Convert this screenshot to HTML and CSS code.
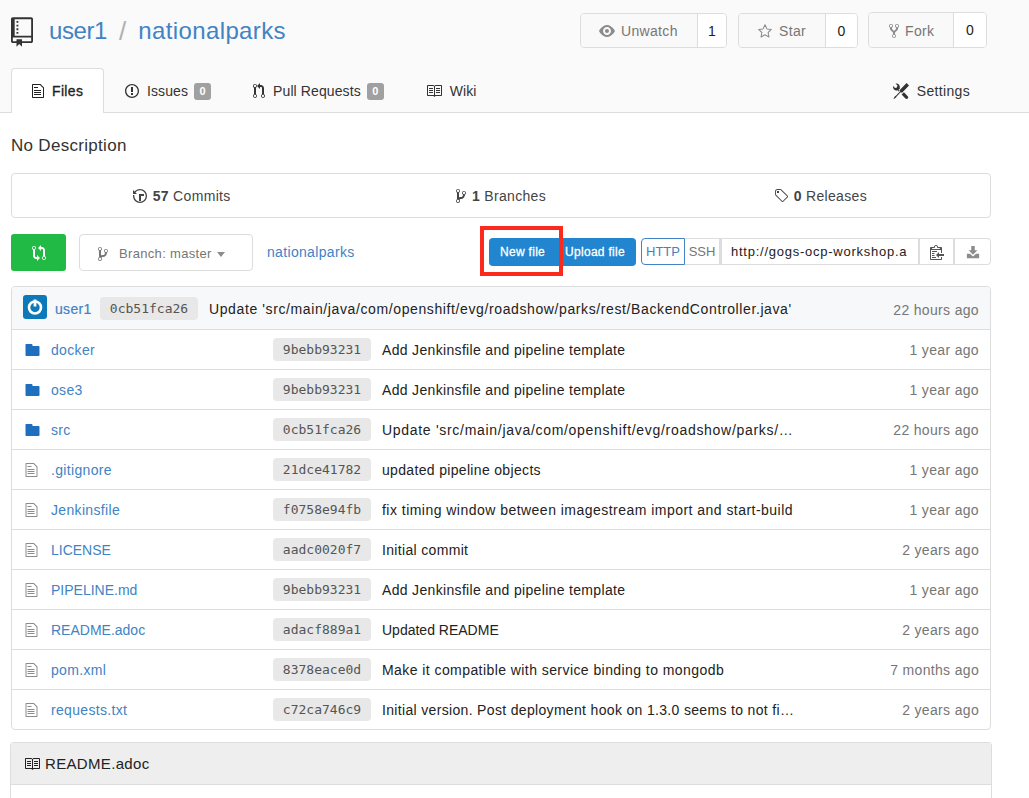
FILE: index.html
```html
<!DOCTYPE html>
<html lang="en">
<head>
<meta charset="utf-8">
<title>user1/nationalparks</title>
<link rel="stylesheet" href="styles.css">
</head>
<body>
<svg class="sprite" aria-hidden="true">
  <defs>
    <symbol id="i-repo" viewBox="0 0 12 16"><path d="M4 9H3V8h1v1zm0-3H3v1h1V6zm0-2H3v1h1V4zm0-2H3v1h1V2zm8-1v12c0 .55-.45 1-1 1H6v2l-1.5-1.5L3 16v-2H1c-.55 0-1-.45-1-1V1c0-.55.45-1 1-1h10c.55 0 1 .45 1 1zm-1 10H1v2h2v-1h3v1h5v-2zm0-10H2v9h9V1z"/></symbol>
    <symbol id="i-file" viewBox="0 0 12 16"><path d="M6 5H2V4h4v1zM2 8h7V7H2v1zm0 2h7V9H2v1zm0 2h7v-1H2v1zm10-7.500V14c0 .55-.45 1-1 1H1c-.55 0-1-.45-1-1V2c0-.55.45-1 1-1h7.500L12 4.500zM11 5L8 2H1v12h10V5z"/></symbol>
    <symbol id="i-issue" viewBox="0 0 14 16"><path d="M7 2.300c3.140 0 5.700 2.560 5.700 5.700s-2.560 5.700-5.700 5.700A5.710 5.710 0 0 1 1.300 8c0-3.140 2.560-5.700 5.700-5.700zM7 1C3.140 1 0 4.140 0 8s3.140 7 7 7 7-3.140 7-7-3.140-7-7-7zm1 3H6v5h2V4zm0 6H6v2h2v-2z"/></symbol>
    <symbol id="i-pr" viewBox="0 0 12 16"><path d="M11 11.280V5c-.03-.78-.34-1.470-.94-2.060C9.460 2.350 8.780 2.030 8 2H7V0L4 3l3 3V4h1c.27.02.48.11.69.31.21.2.3.42.31.69v6.280A1.993 1.993 0 0 0 10 15a1.993 1.993 0 0 0 1-3.720zm-1 2.920c-.66 0-1.200-.55-1.200-1.200 0-.65.55-1.200 1.200-1.200.65 0 1.200.55 1.200 1.200 0 .65-.55 1.200-1.200 1.200zM4 3c0-1.110-.89-2-2-2a1.993 1.993 0 0 0-1 3.720v6.560A1.993 1.993 0 0 0 2 15a1.993 1.993 0 0 0 1-3.720V4.720c.59-.34 1-.98 1-1.720zm-.8 10c0 .66-.55 1.200-1.200 1.200-.65 0-1.200-.55-1.200-1.200 0-.65.55-1.200 1.200-1.200.65 0 1.200.55 1.200 1.200zM2 4.200C1.340 4.200.8 3.650.8 3c0-.65.55-1.200 1.200-1.200.65 0 1.200.55 1.200 1.200 0 .65-.55 1.200-1.200 1.200z"/></symbol>
    <symbol id="i-book" viewBox="0 0 16 16"><path d="M3 5h4v1H3V5zm0 3h4V7H3v1zm0 2h4V9H3v1zm11-5h-4v1h4V5zm0 2h-4v1h4V7zm0 2h-4v1h4V9zm2-6v9c0 .55-.45 1-1 1H9.500l-1 1-1-1H2c-.55 0-1-.45-1-1V3c0-.55.45-1 1-1h5.500l1 1 1-1H15c.55 0 1 .45 1 1zm-8 .5L7.500 3H2v9h6V3.500zm7-.5H9.500l-.5.5V12h6V3z"/></symbol>
    <symbol id="i-tools" viewBox="0 0 16 16"><path d="M4.480 7.270c.26.26 1.280 1.330 1.280 1.330l.56-.58-.88-.91 1.690-1.800s-.76-.74-.43-.45c.32-1.190.03-2.510-.87-3.440C4.930.5 3.660.2 2.520.51l1.930 2-.51 1.960-1.890.52-1.930-2C-.19 4.170.1 5.480 1 6.400c.94.98 2.290 1.260 3.480.87zm6.440 1.940l-2.330 2.300 3.840 3.980c.31.33.73.49 1.140.49.41 0 .82-.16 1.140-.49.63-.65.63-1.700 0-2.350l-3.790-3.930zM16 2.530L13.550 0 6.330 7.460l.88.91-4.310 4.460-.99.53-1.390 2.270.35.37 2.200-1.440.51-1.020L7.900 9.080l.88.91L16 2.530z"/></symbol>
    <symbol id="i-eye" viewBox="0 0 16 16"><path d="M8.060 2C3 2 0 8 0 8s3 6 8.060 6C13 14 16 8 16 8s-3-6-7.940-6zM8 12c-2.200 0-4-1.780-4-4 0-2.200 1.800-4 4-4 2.220 0 4 1.800 4 4 0 2.220-1.780 4-4 4zm2-4c0 1.110-.89 2-2 2-1.110 0-2-.89-2-2 0-1.110.89-2 2-2 1.110 0 2 .89 2 2z"/></symbol>
    <symbol id="i-star" viewBox="0 0 16 16"><path d="M8 1.800l1.900 4.100 4.500.55-3.300 3.050.87 4.450L8 11.750 4.030 13.950l.87-4.450L1.600 6.450l4.500-.55z" fill="none" stroke="currentColor" stroke-width="1.050" stroke-linejoin="round"/></symbol>
    <symbol id="i-fork" viewBox="0 0 10 16"><path d="M8 1a1.993 1.993 0 0 0-1 3.720V6L5 8 3 6V4.720A1.993 1.993 0 0 0 2 1a1.993 1.993 0 0 0-1 3.720V6.500l3 3v1.780A1.993 1.993 0 0 0 5 15a1.993 1.993 0 0 0 1-3.720V9.500l3-3V4.720A1.993 1.993 0 0 0 8 1zM2 4.200C1.340 4.200.8 3.650.8 3c0-.65.55-1.200 1.200-1.200.65 0 1.200.55 1.200 1.200 0 .65-.55 1.200-1.200 1.200zm3 10c-.66 0-1.200-.55-1.200-1.200 0-.65.55-1.200 1.200-1.200.65 0 1.200.55 1.200 1.200 0 .65-.55 1.200-1.200 1.200zm3-10c-.66 0-1.200-.55-1.200-1.200 0-.65.55-1.200 1.200-1.200.65 0 1.200.55 1.200 1.200 0 .65-.55 1.200-1.200 1.200z"/></symbol>
    <symbol id="i-history" viewBox="0 0 14 16"><path d="M8 13H6V6h5v2H8v5zM7 1C4.810 1 2.870 2.020 1.590 3.590L0 2v4h4L2.500 4.500C3.550 3.170 5.170 2.300 7 2.300c3.140 0 5.700 2.560 5.700 5.700s-2.560 5.700-5.700 5.700A5.710 5.710 0 0 1 1.300 8c0-.34.03-.67.09-1H.08C.03 7.330 0 7.660 0 8c0 3.860 3.140 7 7 7s7-3.140 7-7-3.140-7-7-7z"/></symbol>
    <symbol id="i-branch" viewBox="0 0 10 16"><path d="M10 5c0-1.110-.89-2-2-2a1.993 1.993 0 0 0-1 3.720v.3c-.02.52-.23.98-.63 1.380-.4.4-.86.61-1.380.63-.83.02-1.480.16-2 .45V4.720a1.993 1.993 0 0 0-1-3.720C.88 1 0 1.890 0 3a2 2 0 0 0 1 1.720v6.560c-.59.35-1 .99-1 1.720 0 1.110.89 2 2 2 1.110 0 2-.89 2-2 0-.53-.2-1-.53-1.360.09-.06.48-.41.59-.47.25-.11.56-.17.94-.17 1.050-.05 1.950-.45 2.750-1.250S8.950 7.770 9 6.730h-.02C9.590 6.370 10 5.730 10 5zM2 1.800c.66 0 1.200.55 1.200 1.200 0 .65-.55 1.200-1.200 1.200C1.350 4.200.8 3.650.8 3c0-.65.55-1.200 1.200-1.200zm0 12.410c-.66 0-1.200-.55-1.200-1.200 0-.65.55-1.200 1.200-1.200.65 0 1.200.55 1.200 1.200 0 .65-.55 1.200-1.200 1.200zm6-8c-.66 0-1.200-.55-1.200-1.200 0-.65.55-1.200 1.200-1.200.65 0 1.200.55 1.200 1.200 0 .65-.55 1.200-1.200 1.200z"/></symbol>
    <symbol id="i-tag" viewBox="0 0 14 16"><path d="M7.730 1.730C7.260 1.260 6.620 1 5.960 1H3.500C2.130 1 1 2.130 1 3.500v2.470c0 .66.27 1.300.73 1.770l6.060 6.060c.39.39 1.020.39 1.410 0l4.590-4.590a.996.996 0 0 0 0-1.410L7.730 1.730zM2.380 7.090c-.31-.3-.47-.7-.47-1.130V3.500c0-.88.72-1.590 1.590-1.590h2.470c.42 0 .83.16 1.130.47l6.140 6.130-4.730 4.730-6.130-6.150zM3.010 3h2v2H3V3h.01z"/></symbol>
    <symbol id="i-compare" viewBox="0 0 14 16"><path d="M5 12H4c-.27-.02-.48-.11-.69-.31-.21-.2-.3-.42-.31-.69V4.720A1.993 1.993 0 0 0 2 1a1.993 1.993 0 0 0-1 3.720V11c.03.78.34 1.470.94 2.060.6.59 1.280.91 2.060.94h1v2l3-3-3-3v2zM2 1.800c.66 0 1.200.55 1.200 1.200 0 .65-.55 1.200-1.200 1.200C1.350 4.200.8 3.650.8 3c0-.65.55-1.200 1.200-1.200zm11 9.480V5c-.03-.78-.34-1.470-.94-2.060-.6-.59-1.280-.91-2.060-.94H9V0L6 3l3 3V4h1c.27.02.48.11.69.31.21.2.3.42.31.69v6.280A1.993 1.993 0 0 0 12 15a1.993 1.993 0 0 0 1-3.720zm-1 2.920c-.66 0-1.200-.55-1.200-1.200 0-.65.55-1.200 1.200-1.200.65 0 1.200.55 1.200 1.200 0 .65-.55 1.200-1.200 1.200z"/></symbol>
    <symbol id="i-clippy" viewBox="0 0 14 16"><path d="M2 13h4v1H2v-1zm5-6H2v1h5V7zm2 3V8l-3 3 3 3v-2h5v-2H9zM4.500 9H2v1h2.500V9zM2 12h2.500v-1H2v1zm9 1h1v2c-.02.28-.11.52-.3.7-.19.18-.42.28-.7.3H1c-.55 0-1-.45-1-1V4c0-.55.45-1 1-1h3c0-1.110.89-2 2-2 1.110 0 2 .89 2 2h3c.55 0 1 .45 1 1v5h-1V6H1v9h10v-2zM2 5h8c0-.55-.45-1-1-1H8c-.55 0-1-.45-1-1s-.45-1-1-1-1 .45-1 1-.45 1-1 1H3c-.55 0-1 .45-1 1z"/></symbol>
    <symbol id="i-download" viewBox="0 0 16 16"><path d="M6 1h4v5h3L8 11 3 6h3zM1 10h3.500L8 13l3.500-3H15v5H1z"/></symbol>
    <symbol id="i-dir" viewBox="0 0 14 16"><path d="M13 4H7V3c0-.66-.31-1-1-1H1c-.55 0-1 .45-1 1v10c0 .55.45 1 1 1h12c.55 0 1-.45 1-1V5c0-.55-.45-1-1-1z"/></symbol>
  </defs>
</svg>

<header class="repo-head">
  <div class="head-top">
    <h1 class="repo-title">
      <svg class="ic-repo"><use href="#i-repo"/></svg>
      <a class="title-user" href="#">user1</a><span class="slash">/</span><a class="title-repo" href="#">nationalparks</a>
    </h1>
    <div class="head-actions">
      <div class="counter">
        <a class="counter-btn btn-watch" href="#"><svg class="ic ic-16 muted"><use href="#i-eye"/></svg>Unwatch</a><span class="counter-num num-watch">1</span>
      </div>
      <div class="counter">
        <a class="counter-btn btn-star" href="#"><svg class="ic ic-16 muted"><use href="#i-star"/></svg>Star</a><span class="counter-num num-star">0</span>
      </div>
      <div class="counter counter-fork">
        <a class="counter-btn btn-fork" href="#"><svg class="ic ic-10 muted"><use href="#i-fork"/></svg>Fork</a><span class="counter-num num-fork">0</span>
      </div>
    </div>
  </div>
  <nav class="tabs">
    <a class="tab active" href="#"><svg class="ic ic-12"><use href="#i-file"/></svg>Files</a>
    <a class="tab" href="#"><svg class="ic ic-14"><use href="#i-issue"/></svg>Issues<span class="badge">0</span></a>
    <a class="tab" href="#"><svg class="ic ic-12"><use href="#i-pr"/></svg>Pull Requests<span class="badge">0</span></a>
    <a class="tab" href="#"><svg class="ic ic-16"><use href="#i-book"/></svg>Wiki</a>
    <a class="tab tab-right" href="#"><svg class="ic ic-16"><use href="#i-tools"/></svg>Settings</a>
  </nav>
</header>

<main class="page">
  <p class="description">No Description</p>

  <div class="stats">
    <a class="stat" href="#"><svg class="ic ic-14"><use href="#i-history"/></svg><b>57</b> Commits</a>
    <a class="stat" href="#"><svg class="ic ic-10"><use href="#i-branch"/></svg><b>1</b> Branches</a>
    <a class="stat" href="#"><svg class="ic ic-14"><use href="#i-tag"/></svg><b>0</b> Releases</a>
  </div>

  <div class="toolbar">
    <a class="btn-compare" href="#"><svg class="ic-compare"><use href="#i-compare"/></svg></a>
    <a class="btn-branch" href="#"><svg class="ic ic-10"><use href="#i-branch"/></svg>Branch: master<span class="caret"></span></a>
    <a class="crumb" href="#">nationalparks</a>
    <div class="file-actions">
      <a class="btn-blue first" href="#">New file</a><a class="btn-blue last" href="#">Upload file</a>
    </div>
    <div class="clone">
      <span class="clone-http">HTTP</span><span class="clone-ssh">SSH</span><span class="clone-url">http://gogs-ocp-workshop.a</span><span class="clone-icon"><svg class="ic-clip"><use href="#i-clippy"/></svg></span><span class="clone-icon last"><svg class="ic-dl"><use href="#i-download"/></svg></span>
    </div>
    <div class="highlight"></div>
  </div>

  <section class="files">
    <div class="commit-row">
      <span class="avatar">
        <svg viewBox="0 0 24 24" width="24" height="24"><circle cx="12" cy="12.500" r="6" fill="none" stroke="#fff" stroke-width="2.600"/><rect x="10.600" y="4.500" width="2.800" height="7" fill="#fff"/></svg>
      </span>
      <a class="commit-user" href="#">user1</a>
      <a class="sha" href="#">0cb51fca26</a>
      <span class="commit-msg">Update 'src/main/java/com/openshift/evg/roadshow/parks/rest/BackendController.java'</span>
      <span class="age age-head">22 hours ago</span>
    </div>
    <div class="row"><span class="name"><svg class="ic-dir"><use href="#i-dir"/></svg><a href="#">docker</a></span><a class="sha" href="#">9bebb93231</a><span class="msg">Add Jenkinsfile and pipeline template</span><span class="age">1 year ago</span></div>
    <div class="row"><span class="name"><svg class="ic-dir"><use href="#i-dir"/></svg><a href="#">ose3</a></span><a class="sha" href="#">9bebb93231</a><span class="msg">Add Jenkinsfile and pipeline template</span><span class="age">1 year ago</span></div>
    <div class="row"><span class="name"><svg class="ic-dir"><use href="#i-dir"/></svg><a href="#">src</a></span><a class="sha" href="#">0cb51fca26</a><span class="msg msg-path">Update 'src/main/java/com/openshift/evg/roadshow/parks/…</span><span class="age">22 hours ago</span></div>
    <div class="row"><span class="name"><svg class="ic-doc"><use href="#i-file"/></svg><a href="#">.gitignore</a></span><a class="sha" href="#">21dce41782</a><span class="msg">updated pipeline objects</span><span class="age">1 year ago</span></div>
    <div class="row"><span class="name"><svg class="ic-doc"><use href="#i-file"/></svg><a href="#">Jenkinsfile</a></span><a class="sha" href="#">f0758e94fb</a><span class="msg msg-dash">fix timing window between imagestream import and start-build</span><span class="age">1 year ago</span></div>
    <div class="row"><span class="name"><svg class="ic-doc"><use href="#i-file"/></svg><a class="caps" href="#">LICENSE</a></span><a class="sha" href="#">aadc0020f7</a><span class="msg">Initial commit</span><span class="age">2 years ago</span></div>
    <div class="row"><span class="name"><svg class="ic-doc"><use href="#i-file"/></svg><a class="caps" href="#">PIPELINE.md</a></span><a class="sha" href="#">9bebb93231</a><span class="msg">Add Jenkinsfile and pipeline template</span><span class="age">1 year ago</span></div>
    <div class="row"><span class="name"><svg class="ic-doc"><use href="#i-file"/></svg><a class="caps" href="#">README.adoc</a></span><a class="sha" href="#">adacf889a1</a><span class="msg caps">Updated README</span><span class="age">2 years ago</span></div>
    <div class="row"><span class="name"><svg class="ic-doc"><use href="#i-file"/></svg><a href="#">pom.xml</a></span><a class="sha" href="#">8378eace0d</a><span class="msg msg-wide">Make it compatible with service binding to mongodb</span><span class="age">7 months ago</span></div>
    <div class="row"><span class="name"><svg class="ic-doc"><use href="#i-file"/></svg><a href="#">requests.txt</a></span><a class="sha" href="#">c72ca746c9</a><span class="msg">Initial version. Post deployment hook on 1.3.0 seems to not fi…</span><span class="age">2 years ago</span></div>
  </section>

  <section class="readme">
    <div class="readme-head"><svg class="ic ic-16"><use href="#i-book"/></svg>README.adoc</div>
    <div class="readme-body"></div>
  </section>
</main>
</body>
</html>
```

FILE: styles.css
```css
* { box-sizing: border-box; }
html, body { margin: 0; padding: 0; }
body {
  font-family: "Liberation Sans", Arial, sans-serif;
  font-size: 14px;
  line-height: 20px;
  letter-spacing: 0.33px;
  color: #333;
  background: #fff;
}
a { color: inherit; text-decoration: none; }
.sprite { display: none; }
.ic { fill: currentColor; height: 16px; flex: none; margin-right: 8px; }
.ic-16 { width: 16px; }
.ic-14 { width: 14px; }
.ic-12 { width: 12px; }
.ic-10 { width: 10px; }
.muted { color: #8c8c8c; }

/* Header */
.repo-head {
  height: 113px;
  background: #fafafa;
  border-bottom: 1px solid #ddd;
  padding: 12px 38px 0 11px;
}
.head-top { display: flex; justify-content: space-between; height: 36px; }
.repo-title {
  margin: 1px 0 0;
  display: flex;
  align-items: center;
  font-size: 24px;
  font-weight: 400;
  line-height: 36px;
  color: #4183c4;
  height: 36px;
}
.title-user { letter-spacing: -0.4px; }
.title-repo { letter-spacing: 0.38px; }
.ic-repo { width: 22px; height: 30px; fill: #333; margin: 0 16px -1px 0; flex: none; }
.slash { color: #b0b0b0; margin: 0 12px; font-size: 26px; letter-spacing: 0; }

.head-actions { display: flex; gap: 11px; margin-right: 4px; margin-top: 1px; }
.counter {
  display: flex;
  height: 35px;
  border: 1px solid #ddd;
  border-radius: 4px;
  overflow: hidden;
}
.counter-fork { height: 36px; margin-top: -1px; margin-left: -1px; }
.counter-btn {
  display: flex;
  align-items: center;
  background: #f9f9f9;
  color: #767676;
  font-size: 14px;
  border-right: 1px solid #ddd;
}
.btn-watch { width: 117px; padding-left: 18px; }
.btn-star { width: 87px; padding-left: 18px; }
.btn-fork { width: 85px; padding: 2px 0 0 20px; }
.counter-btn .ic-16 { margin-right: 6px; }
.counter-btn .ic-10 { margin-right: 6px; }
.counter-num {
  display: flex;
  align-items: center;
  justify-content: center;
  background: #fff;
  color: #222;
  font-size: 14px;
}
.num-watch { width: 28px; }
.num-star { width: 31px; }
.num-fork { width: 32px; }

.tabs { display: flex; margin-top: 20px; height: 45px; }
.tab {
  display: flex;
  align-items: center;
  padding: 0 20px;
  border: 1px solid transparent;
  border-bottom: 0;
  color: #333;
  font-size: 14px;
  letter-spacing: 0.1px;
}
.tab.active {
  width: 93px;
  background: #fff;
  border-color: #ddd;
  border-radius: 4px 4px 0 0;
  color: #222;
  letter-spacing: 0.33px;
  -webkit-text-stroke: 0.3px #222;
}
.tab-right { margin-left: auto; letter-spacing: 0.33px; }
.badge {
  margin-left: 6px;
  width: 17px;
  height: 17px;
  border-radius: 3px;
  background: #a0a0a0;
  color: #fff;
  font-size: 11px;
  font-weight: 700;
  line-height: 17px;
  text-align: center;
}

/* Page */
.page { padding: 0 38px 0 11px; }
.description { margin: 22px 0 16px; font-size: 17px; line-height: 22px; letter-spacing: 0.3px; color: #333; }

.stats {
  display: flex;
  height: 45px;
  padding: 0 10px;
  border: 1px solid #ddd;
  border-radius: 4px;
}
.stat { flex: 1; display: flex; align-items: center; justify-content: center; white-space: pre; color: #444; }
.stat .ic { margin-right: 6px; }
.stat b { color: #444; }

.toolbar { position: relative; display: flex; align-items: flex-start; height: 37px; margin-top: 16px; }
.btn-compare {
  display: flex;
  align-items: center;
  justify-content: center;
  width: 55px;
  height: 37px;
  background: #21ba45;
  border-radius: 3px;
}
.ic-compare { width: 14px; height: 16px; fill: #fff; }
.btn-branch {
  display: flex;
  align-items: center;
  width: 174px;
  height: 37px;
  margin-left: 13px;
  padding: 2px 0 0 18px;
  border: 1px solid #ddd;
  border-radius: 4px;
  color: #767676;
  font-size: 13px;
}
.btn-branch .ic { margin-right: 11px; }
.caret {
  margin: 2px 0 0 5px;
  border: 4px solid transparent;
  border-top: 5px solid #8c8c8c;
  border-bottom: 0;
}
.crumb { margin: 8px 0 0 14px; color: #4183c4; }
.file-actions { display: flex; margin: 4px 0 0 auto; height: 28px; }
.btn-blue {
  display: flex;
  align-items: center;
  background: #2185d0;
  color: #fff;
  font-size: 12px;
  letter-spacing: 0.3px;
  -webkit-text-stroke: 0.3px #fff;
}
.btn-blue.first { width: 68px; padding-left: 11px; border-radius: 4px 0 0 4px; }
.btn-blue.last { width: 79px; padding-left: 8px; border-radius: 0 4px 4px 0; }

.clone { display: flex; height: 27px; margin: 4px 0 0 5px; font-size: 13px; letter-spacing: 0; }
.clone-http {
  width: 44px;
  display: flex; align-items: center; justify-content: center;
  border: 1px solid #4183c4;
  border-radius: 4px 0 0 4px;
  color: #4183c4;
}
.clone-ssh {
  width: 35px;
  display: flex; align-items: center; justify-content: center;
  border: 1px solid #ddd;
  border-left: 0;
  color: #767676;
}
.clone-url {
  width: 198px;
  display: flex; align-items: center;
  padding-left: 9px;
  border: 1px solid #ddd;
  border-left: 2px solid #ddd;
  border-right: 0;
  color: #222;
  letter-spacing: 0.75px;
  white-space: nowrap;
  overflow: hidden;
}
.clone-icon {
  width: 35px;
  display: flex; align-items: center; justify-content: center;
  border: 1px solid #ddd;
  border-right: 0;
  border-left-width: 2px;
}
.clone-icon.last { width: 38px; border-right: 1px solid #ddd; border-radius: 0 4px 4px 0; }
.ic-clip { width: 14px; height: 16px; fill: #555; }
.ic-dl { width: 14px; height: 14px; fill: #8c8c8c; }

.highlight {
  position: absolute;
  left: 469px;
  top: -8px;
  width: 83px;
  height: 50px;
  border: 4px solid #fb2a1c;
  pointer-events: none;
}

/* File table */
.files { margin-top: 15px; border: 1px solid #ddd; border-radius: 4px; overflow: hidden; }
.commit-row, .row { display: flex; align-items: center; }
.commit-row {
  height: 43px;
  padding: 0 11px;
  background: #f7f8f9;
  border-bottom: 1px solid #ddd;
}
.avatar {
  width: 24px;
  height: 24px;
  background: #0e79b8;
  border-radius: 3px;
  flex: none;
  margin-bottom: 2px;
}
.avatar svg { display: block; }
.commit-user { margin: 2px 14px 0 8px; color: #4183c4; -webkit-text-stroke: 0.2px #4183c4; width: 31px; white-space: nowrap; }
.sha {
  display: block;
  flex: none;
  width: 98px;
  height: 23px;
  border-radius: 4px;
  background: #e8e8e8;
  color: #555;
  font-family: "DejaVu Sans Mono", "Liberation Mono", monospace;
  font-size: 13px;
  letter-spacing: 0;
  line-height: 23px;
  text-align: center;
}
.commit-msg { margin: 2px 0 0 11px; color: #222; white-space: nowrap; letter-spacing: 0.61px; }
.age { margin-left: auto; color: #767676; white-space: nowrap; }
.age-head { margin-top: 3px; }
.row { height: 40px; padding: 0 11px 0 13px; border-bottom: 1px solid #ddd; }
.row:last-child { border-bottom: 0; height: 39px; }
.name { display: flex; align-items: center; width: 248px; flex: none; color: #4183c4; }
.ic-dir { width: 15px; height: 16px; fill: #1e70bf; margin-right: 11px; flex: none; }
.ic-doc { width: 13px; height: 16px; fill: #8c8c8c; margin: 0 13px 0 0; flex: none; }
.msg { margin-left: 11px; color: #222; white-space: nowrap; }
.msg-path { letter-spacing: 0.7px; }
.msg-dash { letter-spacing: 0.47px; }
.msg-wide { letter-spacing: 0.43px; }
.caps { letter-spacing: 0; }

/* Readme */
.readme { margin: 12px -1px 0; border: 1px solid #ddd; border-bottom: 0; border-radius: 4px 4px 0 0; }
.readme-head {
  display: flex;
  align-items: center;
  height: 42px;
  padding-left: 13px;
  background: #eee;
  border-bottom: 1px solid #ddd;
  color: #222;
  font-size: 15px;
}
.readme-head .ic { margin-right: 5px; }
.readme-body { height: 13px; }
```
